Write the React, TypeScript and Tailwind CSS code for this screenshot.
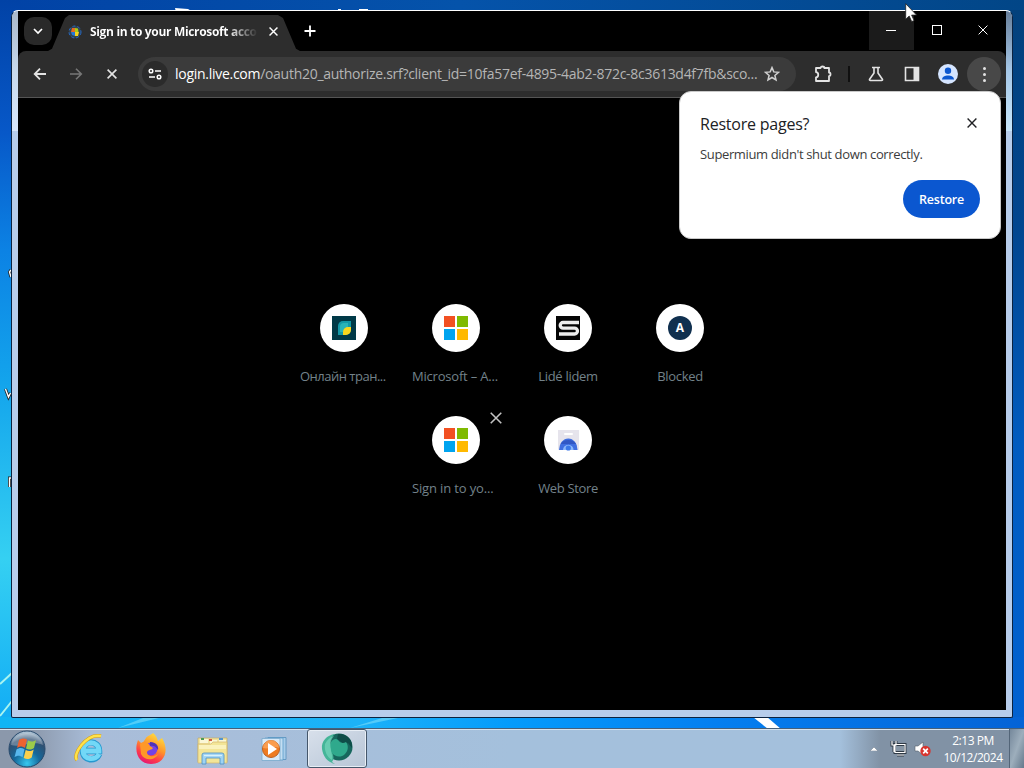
import type { ReactNode } from 'react'
import clsx from 'clsx'

interface Shortcut {
  id: string
  label: string
  icon: ReactNode
  truncated?: boolean
  removable?: boolean
  labelClass: string
}

function MicrosoftLogo() {
  return (
    <svg width="24" height="24" viewBox="0 0 24 24">
      <path fill="#f25022" d="M0 0h11v11H0z" />
      <path fill="#7fba00" d="M13 0h11v11H13z" />
      <path fill="#00a4ef" d="M0 13h11v11H0z" />
      <path fill="#ffb900" d="M13 13h11v11H13z" />
    </svg>
  )
}

function LeafLogo() {
  return (
    <svg width="24" height="24" viewBox="0 0 24 24">
      <path fill="#003947" d="M0 0h24v24H0z" />
      <path fill="#1399a8" d="M6 19V10a5 5 0 0 1 5-5h8v8a6 6 0 0 1-6 6z" />
      <path fill="#29b4b8" d="M8 16v-5a4 4 0 0 1 4-4h4v9z" />
      <path fill="#f7d61e" d="M11 19v-3a5 5 0 0 1 5-5h3v3a5 5 0 0 1-5 5z" />
    </svg>
  )
}

function SLogo() {
  return (
    <svg width="24" height="24" viewBox="0 0 24 24" fill="none">
      <path fill="#050505" d="M0 0h24v24H0z" />
      <path stroke="#eeeeee" strokeWidth="3.300" d="M23 6.500H7a2.700 2.700 0 0 0 0 5.600h11.500a2.900 2.900 0 0 1 0 5.900H3" />
    </svg>
  )
}

function WebStoreLogo() {
  return (
    <svg width="24" height="24" viewBox="0 0 24 24">
      <path fill="#e6e4ec" d="M2 2h21v19a1 1 0 0 1-1 1H3a1 1 0 0 1-1-1z" />
      <rect x="8" y="5" width="9" height="2" rx="1" fill="#fff" />
      <path fill="#3f6ee0" d="M3 22a9.300 11.500 0 0 1 18.600 0z" />
      <path fill="#3157c4" d="M4.500 16a8.800 7.500 0 0 1 15.600 0z" />
      <path fill="#8cb8fb" d="M7 22a5.300 5.300 0 0 1 10.600 0z" />
      <circle cx="12.300" cy="20" r="2.600" fill="#3a77e8" />
    </svg>
  )
}

const ROWS: Shortcut[][] = [
  [
    { id: 'translate', label: 'Онлайн тран...', icon: <LeafLogo />, truncated: true, labelClass: 'tracking-[-0.5px]' },
    { id: 'ms', label: 'Microsoft – A...', icon: <MicrosoftLogo />, truncated: true, labelClass: 'tracking-[-0.2px]' },
    { id: 'lide', label: 'Lidé lidem', icon: <SLogo />, labelClass: 'tracking-[-0.3px]' },
    {
      id: 'blocked',
      label: 'Blocked',
      icon: <span className="flex size-6 items-center justify-center rounded-full bg-[#10304f] text-[12px] font-bold text-white">A</span>,
      labelClass: 'tracking-[-0.3px]',
    },
  ],
  [
    { id: 'signin', label: 'Sign in to yo...', icon: <MicrosoftLogo />, truncated: true, removable: true, labelClass: 'tracking-[-0.15px]' },
    { id: 'store', label: 'Web Store', icon: <WebStoreLogo />, labelClass: 'tracking-[-0.35px]' },
  ],
]

function Cross({ size, width = 1.6, className }: { size: number; width?: number; className?: string }) {
  return (
    <svg width={size} height={size} viewBox="0 0 10 10" fill="none" stroke="currentColor" strokeWidth={width} className={className}>
      <path d="M.6.6l8.800 8.800M9.400.6L.6 9.400" />
    </svg>
  )
}

function Wallpaper() {
  return (
    <svg width="1024" height="768" className="absolute inset-0">
      <defs>
        <linearGradient id="wallTop">
          <stop offset="0" stopColor="#0142a6" />
          <stop offset=".45" stopColor="#0553aa" />
          <stop offset="1" stopColor="#024687" />
        </linearGradient>
        <linearGradient id="wallLeft" x2="0" y2="1">
          <stop offset="0" stopColor="#0142a6" />
          <stop offset=".18" stopColor="#0758c8" />
          <stop offset=".34" stopColor="#0c82e4" />
          <stop offset=".52" stopColor="#13a4ec" />
          <stop offset=".76" stopColor="#35d0f2" />
          <stop offset="1" stopColor="#0fa9f5" />
        </linearGradient>
        <linearGradient id="wallRight" x2="0" y2="1">
          <stop offset="0" stopColor="#03417c" />
          <stop offset=".3" stopColor="#02468f" />
          <stop offset=".6" stopColor="#025cc0" />
          <stop offset="1" stopColor="#0262d2" />
        </linearGradient>
        <linearGradient id="wallBottom">
          <stop offset="0" stopColor="#10b5f5" />
          <stop offset=".35" stopColor="#1cb2f8" />
          <stop offset=".5" stopColor="#049bfb" />
          <stop offset=".7" stopColor="#047ff0" />
          <stop offset="1" stopColor="#0463d6" />
        </linearGradient>
      </defs>
      <path fill="url(#wallTop)" d="M0 0h1024v20H0z" />
      <path fill="url(#wallLeft)" d="M0 0h20v735H0z" />
      <path fill="url(#wallRight)" d="M1000 10h24v725h-24z" />
      <path fill="url(#wallBottom)" d="M0 717h1024v12H0z" />
      <path fill="#fff" d="M175 8l13 1 5 3h-17zM338 10h3v-1h-3zM359 9h9v1h-9z" />
      <path fill="#fff" d="M753 717h14l14 12h-13z" />
      <path stroke="#a9f4f0" strokeWidth="2" d="M0 684l12-11M0 716l12-15" />
      <path fill="#8ee6fa" opacity=".5" d="M118 728l25-10h16zM350 728l32-10h16z" />
      {/* desktop labels peeking out from behind the window */}
      <path stroke="#222" strokeWidth="3" fill="none" d="M11 270l-1.500 2 1.500 5M5.500 389l3 8 2-4M9.500 487v-9h2" />
      <path stroke="#fff" strokeWidth="1.400" fill="none" d="M11 270l-1.500 2 1.500 5M5.500 389l3 8 2-4M9.500 487v-9h2" />
    </svg>
  )
}

function TabStrip() {
  return (
    <div className="flex h-10 shrink-0 bg-black">
      <button className="mt-[6px] ml-[6px] flex size-7 items-center justify-center rounded-[10px] bg-[#292929] text-white">
        <svg width="10" height="7" viewBox="0 0 10 7" fill="none" stroke="currentColor" strokeWidth="1.700">
          <path d="M1 1l4 4 4-4" />
        </svg>
      </button>
      <div className="mt-1 -ml-1 flex h-9 w-[252px] items-center bg-[#2d2d2d] pb-[3px] pl-5 [clip-path:polygon(0_100%,4px_94%,17px_8%,21px_0,230px_0,235px_8%,248px_94%,252px_100%)]">
        <svg width="14" height="14" viewBox="0 0 14 14" className="shrink-0">
          <circle cx="7" cy="7" r="6" fill="#33434f" stroke="#2469c7" strokeDasharray="3 2" />
          <path fill="#e66b20" d="M4 3h3v4H3z" />
          <path fill="#a7ce16" d="M7 3l3 .5.500 3.500H7z" />
          <path fill="#2478d6" d="M3 7h4v4l-3-1z" />
          <path fill="#f4d31d" d="M7 7h4l-1 4H7z" />
        </svg>
        <span className="mt-px ml-2 w-[168px] shrink-0 bg-linear-to-r from-white from-82% to-transparent bg-clip-text text-[12px] font-bold tracking-[-0.33px] whitespace-nowrap text-transparent">
          Sign in to your Microsoft acco
        </span>
        <Cross size={9} className="ml-[11px] shrink-0 text-white" />
      </div>
      <button className="mt-[14px] ml-1 h-3 text-white">
        <svg width="12" height="12" viewBox="0 0 12 12" stroke="currentColor" strokeWidth="1.800">
          <path d="M6 .5v11M.5 6h11" />
        </svg>
      </button>
      <div className="ml-auto flex text-white">
        <button className="flex h-[39px] w-[45px] items-center justify-center bg-[#1b1b1b] pr-[2px]">
          <span className="h-px w-[10px] bg-white" />
        </button>
        <button className="flex h-[38px] w-[46px] items-center justify-center">
          <span className="size-[10px] border border-white" />
        </button>
        <button className="flex h-[38px] w-[46px] items-center justify-center pr-px">
          <Cross size={10} width={1} />
        </button>
      </div>
    </div>
  )
}

function Toolbar() {
  return (
    <div className="h-[47px] shrink-0 bg-black">
      <div className="flex h-full items-center rounded-t-[8px] border-b border-[#555] bg-[#2d2d2d] text-[#e3e3e3]">
        <svg width="14" height="12" viewBox="0 0 14 12" fill="none" stroke="currentColor" strokeWidth="1.800" className="ml-[15px]">
          <path d="M13 6H1.500M7 .7L1.700 6 7 11.300" />
        </svg>
        <svg width="14" height="12" viewBox="0 0 14 12" fill="none" stroke="#777" strokeWidth="1.600" className="ml-[22px]">
          <path d="M1 6h11.500M7 .7L12.300 6 7 11.300" />
        </svg>
        <Cross size={10} className="ml-6" />
        <div className="ml-[21px] flex h-[34px] w-[658px] items-center rounded-full bg-[#3b3b3b]">
          <span className="ml-[4px] flex size-[26px] items-center justify-center rounded-full bg-[#2b2b2b]">
            <svg width="14" height="12" viewBox="0 0 14 12" fill="none" stroke="#fff" strokeWidth="1.500">
              <circle cx="3" cy="3" r="1.800" />
              <path d="M7 3h6M1 9h6" />
              <circle cx="11" cy="9" r="1.800" />
            </svg>
          </span>
          <span className="-mt-px ml-[7px] w-[584px] text-[14px] tracking-[-0.28px] whitespace-nowrap text-[#b5b5b5]">
            <span className="text-white">login.live.com</span>/oauth20_authorize.srf?client_id=10fa57ef-4895-4ab2-872c-8c3613d4f7fb&amp;sco...
          </span>
          <svg width="16" height="16" viewBox="0 0 16 16" fill="none" stroke="#d0d0d0" strokeWidth="1.500" className="ml-[5px]">
            <path d="M8 1.600l1.800 4.300 4.700.4-3.600 3.100 1.100 4.600L8 11.500 4 14l1.100-4.600-3.600-3.100 4.700-.4z" />
          </svg>
        </div>
        <svg width="18" height="18" viewBox="0 0 18 18" fill="none" stroke="currentColor" strokeWidth="1.800" strokeLinejoin="round" className="ml-[18px]">
          <path d="M2 3h4.500c0-2 3.800-2 3.800 0H15v4.500c2 0 2 3.600 0 3.600V16H2v-3.700c3-.3 3-4.900 0-5.200z" />
        </svg>
        <span className="ml-[16px] h-4 w-[2px] bg-[#101010]" />
        <svg width="16" height="16" viewBox="0 0 16 16" fill="none" stroke="currentColor" strokeWidth="1.600" strokeLinejoin="round" className="ml-[18px]">
          <path d="M4 1.500h8M6 2v5l-4.400 6.200c-.4.700 0 1.300.8 1.300h11.200c.8 0 1.200-.6.8-1.300L10 7V2" />
        </svg>
        <svg width="16" height="16" viewBox="0 0 16 16" className="ml-[20px]">
          <path fill="none" stroke="currentColor" strokeWidth="1.600" d="M1.500 1.500h13v13h-13z" />
          <path fill="currentColor" d="M9.500 1.500H15v13H9.500z" />
        </svg>
        <svg width="20" height="20" viewBox="0 0 20 20" className="ml-[18px]">
          <circle cx="10" cy="10" r="10" fill="#d5e5ff" />
          <circle cx="10" cy="6.800" r="3.200" fill="#0b57d0" />
          <path fill="#0b57d0" d="M4 15.500c0-5.500 12-5.500 12 0z" />
        </svg>
        <span className="ml-[9px] flex size-[34px] flex-col items-center justify-center gap-[3px] rounded-full bg-[#484848]">
          <i className="size-[3px] rounded-full bg-[#e3e3e3]" />
          <i className="size-[3px] rounded-full bg-[#e3e3e3]" />
          <i className="size-[3px] rounded-full bg-[#e3e3e3]" />
        </span>
      </div>
    </div>
  )
}

function ShortcutTile({ item }: { item: Shortcut }) {
  return (
    <div className="relative flex h-28 w-28 flex-col items-center">
      <div className="flex size-12 items-center justify-center rounded-full bg-white">{item.icon}</div>
      <div
        className={clsx(
          'mt-[14px] w-[88px] text-[13px] leading-5 whitespace-nowrap text-[#73828a]',
          item.truncated ? 'text-left' : 'text-center',
          item.labelClass,
        )}
      >
        {item.label}
      </div>
      {item.removable && <Cross size={12} width={1.3} className="absolute top-[-4px] right-[10px] text-[#c3c3c3]" />}
    </div>
  )
}

function RestoreBubble() {
  return (
    <div className="absolute top-[80px] left-[667px] flex h-[148px] w-[322px] flex-col rounded-[12px] border border-[#c9c9c9] bg-white px-5">
      <div className="mt-[20px] flex h-6 items-center justify-between text-[#202124]">
        <h2 className="text-[16px] tracking-[-0.22px]">Restore pages?</h2>
        <Cross size={10} width={1.4} className="mt-[-2px] mr-[3px]" />
      </div>
      <p className="mt-[8px] text-[13px] leading-5 tracking-[-0.36px] whitespace-nowrap text-[#3c3c3c]">Supermium didn't shut down correctly.</p>
      <button className="mt-[16px] ml-auto h-[38px] w-[77px] rounded-full bg-[#0b57d0] pt-[2px] text-[12.5px] font-semibold tracking-[-0.2px] text-white">
        Restore
      </button>
    </div>
  )
}

function BrowserWindow() {
  return (
    <div className="absolute top-[10px] left-[11px] h-[708px] w-[1002px] rounded-t-[7px] rounded-b-[2px] border border-[#0c2340] border-t-white bg-[#b7cdeb] px-[6px] pb-[7px]">
      <span className="absolute top-0 left-0 h-[120px] w-[6px] rounded-tl-[6px] bg-linear-to-b from-[#a9b8c9] via-[#c7d9ec] to-[#d8e7fb]" />
      <span className="absolute top-0 right-0 h-[120px] w-[6px] rounded-tr-[6px] bg-linear-to-b from-[#687f9a] via-[#a6c8e8] to-[#c8e7fb]" />
      <div className="flex h-full flex-col bg-black">
        <TabStrip />
        <Toolbar />
        <div className="flex flex-1 flex-col items-center pt-[206px]">
          {ROWS.map((row, i) => (
            <div key={i} className="flex">
              {row.map(item => (
                <ShortcutTile key={item.id} item={item} />
              ))}
            </div>
          ))}
        </div>
      </div>
      <RestoreBubble />
    </div>
  )
}

function StartOrb() {
  return (
    <svg width="38" height="38" viewBox="0 0 38 38">
      <defs>
        <radialGradient id="orb" cy=".9" r=".9">
          <stop offset="0" stopColor="#38c8ef" />
          <stop offset=".4" stopColor="#14689b" />
          <stop offset=".75" stopColor="#304f70" />
          <stop offset="1" stopColor="#c5d9e8" />
        </radialGradient>
      </defs>
      <circle cx="19" cy="19" r="18" fill="url(#orb)" stroke="#27496c" />
      <path fill="#ffffff" opacity=".28" d="M3 15C6-1 32-1 35 15c-10-5-22 3-32 0z" />
      <path fill="#ed6231" d="M11 10c3-2 5-2 8-.5L17 18c-3-2-5-2-8 0z" />
      <path fill="#9bcb4a" d="M20 10.500c3 1.500 5 1.500 8-.5l-2 8c-3 2-5 2-8 .5z" />
      <path fill="#58b7ed" d="M8.500 19.500c3-2 5-2 8-.2l-2 8c-3-2-5-2-8 0z" />
      <path fill="#fbd04c" d="M17.700 20c3 1.500 5 1.500 8-.5l-2 8c-3 2-5 2-8 .5z" />
    </svg>
  )
}

function ExplorerE() {
  return (
    <svg width="34" height="34" viewBox="0 0 34 34" fill="none">
      <path stroke="#2698cf" strokeWidth="6.500" d="M27 22c-3 8-16 7-16-3 0-12 16-11 16 0H12" />
      <path stroke="#72d8f7" strokeWidth="4.800" d="M27 22c-3 7-16 6-16-3 0-11 16-11 16 0H12" />
      <path stroke="#d69d16" strokeWidth="3.500" d="M5 28C0 23 14 1 29 4" />
      <path stroke="#ffe24a" strokeWidth="2.400" d="M5 28C0 23 14 1 29 4" />
    </svg>
  )
}

function FirefoxLogo() {
  return (
    <svg width="32" height="34" viewBox="0 0 32 34">
      <defs>
        <linearGradient id="fox" x1=".8" y1="0" x2=".3" y2="1">
          <stop offset="0" stopColor="#ffe744" />
          <stop offset=".45" stopColor="#ff9629" />
          <stop offset=".75" stopColor="#ff3b48" />
          <stop offset="1" stopColor="#e31675" />
        </linearGradient>
      </defs>
      <path fill="url(#fox)" d="M18 1c3 2 4 5 5 8l4-3c8 13 2 26-11 26C5 32-2 21 3 8l4 4 4-6c1-2 5-3 7-5z" />
      <circle cx="16" cy="17" r="6.500" fill="#7542e5" />
      <path fill="#ff9828" d="M5 12c4-4 8-2 10 2l3 2c-2 3-6 1-6 5 1 4 7 4 11 1-2 6-13 8-17 0z" />
      <path fill="#4f33b6" d="M15 10c6 0 9 4 8 8-2-4-5-5-8-4z" />
    </svg>
  )
}

function FolderIcon() {
  return (
    <svg width="34" height="32" viewBox="0 0 34 32">
      <path fill="#f1e4a0" stroke="#c2ac68" strokeWidth=".7" d="M2 3h29v24H2z" />
      <path fill="#fbf7d6" d="M4 4h8v4H4zM14 5h7v4h-7zM23 5h7v4h-7z" />
      <path fill="#4d9b55" d="M5 3h3v2H5z" />
      <path fill="#d25a43" d="M13 4h3v2h-3z" />
      <path fill="#5494cf" d="M23 3h4v2h-4z" />
      <path fill="#f3e597" stroke="#d2b66e" strokeWidth=".7" d="M2 9h13l2-2h14v21H2z" />
      <path fill="#faf2bd" d="M3 10h27v4H3z" />
      <path fill="#9fd3f2" stroke="#4b91c4" strokeWidth=".8" d="M6 29V20q0-2 2-2h18q2 0 2 2v9h-4v-6H10v6z" />
      <path stroke="#d8f1fc" strokeWidth="1.300" d="M8 20.500h18" />
    </svg>
  )
}

function MediaPlayerIcon() {
  return (
    <svg width="28" height="26" viewBox="0 0 28 26">
      <path fill="#a9cdea" stroke="#5591bd" strokeWidth=".8" d="M8 1.500h18v22H8z" />
      <path fill="#c3def2" stroke="#5b9cc9" strokeWidth=".8" d="M5 2h18v22H5z" />
      <path fill="#d7e9f8" stroke="#7aa9cb" strokeWidth=".8" d="M2 2.500h18v22H2z" />
      <circle cx="11" cy="13" r="8.500" fill="#ee7b21" stroke="#bd6122" />
      <path fill="#ffad63" opacity=".7" d="M3 12a8 8 0 0 1 16 0c-5-3-10 2-16 0z" />
      <path fill="#fff" d="M8 7l9 6-9 6z" />
    </svg>
  )
}

function SupermiumIcon() {
  return (
    <svg width="34" height="32" viewBox="0 0 34 32">
      <circle cx="19" cy="14" r="13.500" fill="#17675d" />
      <path fill="#0f4d48" d="M18 1c9-1 15 6 14 14l-4-5-4 1-7-5z" />
      <path fill="#45b598" d="M2 16C1 8 7 2 15 1c-5 4-6 9-4 15s4 9 1 13l3 2C7 29 3 23 2 16z" />
      <path fill="#2fa98c" d="M11 9c2-3 5-4 7-2 2 3 5 4 8 2 3 4 2 9-1 12-4 4-10 3-13-1-2-3-3-8-1-11z" />
      <path fill="#7fdcc2" opacity=".6" d="M5 11c2-4 5-7 9-8-4 5-4 9-3 13 0 4 2 7 1 11-5-3-8-9-7-16z" />
    </svg>
  )
}

function Tray() {
  return (
    <div className="ml-auto flex h-full items-center text-white">
      <svg width="8" height="5" viewBox="0 0 8 5" className="mb-px">
        <path fill="#fff" stroke="#6b7785" strokeWidth=".5" d="M0 5l4-4 4 4z" />
      </svg>
      <svg width="17" height="17" viewBox="0 0 17 17" fill="none" className="ml-[12px]">
        <path stroke="#303b46" strokeWidth="3" d="M5 4.500h10v8H5zM7 15h7M2 1v4h4V1M4 5v7" />
        <path stroke="#fff" strokeWidth="1.200" d="M5 4.500h10v8H5zM7 15h7M2 1v4h4V1M4 5v7" />
        <path fill="#8796a5" d="M6 6h8v5H6z" />
      </svg>
      <svg width="17" height="16" viewBox="0 0 17 16" className="ml-[7px]">
        <path fill="#fff" stroke="#555f69" strokeWidth=".6" d="M1 5h3l5-4v13l-5-4H1z" />
        <circle cx="11.500" cy="10" r="5.200" fill="#d7352f" />
        <path stroke="#fff" strokeWidth="1.700" d="M9.200 7.700l4.600 4.600M13.800 7.700l-4.600 4.600" />
      </svg>
      <div className="ml-[12px] w-[60px] text-center text-[12px] leading-[17px] tracking-[-0.45px] whitespace-nowrap">
        <div>2:13 PM</div>
        <div>10/12/2024</div>
      </div>
      <span className="ml-[6px] h-full w-[15px] border-l border-[#536578] bg-linear-to-br from-[#75889b] via-[#9daebc] to-[#66798c]" />
    </div>
  )
}

function Taskbar() {
  return (
    <div className="absolute top-[728px] left-0 flex h-10 w-full items-center border-t border-[#46607a] bg-[#a4c0dc]">
      <span className="absolute inset-0 bg-linear-to-r from-[#8b98ab] from-3% via-[#a9bdd9] via-9% to-[#a4c0dc] to-50%" />
      <span className="absolute top-0 right-0 bottom-0 w-[184px] bg-linear-to-r from-[#a4c0dc] to-[#8192a5] to-22%" />
      <span className="absolute top-0 h-px w-full bg-[#d6e3ef]" />
      <div className="relative flex h-full w-full items-center">
        <div className="ml-2"><StartOrb /></div>
        <div className="ml-[26px]"><ExplorerE /></div>
        <div className="ml-[29px]"><FirefoxLogo /></div>
        <div className="ml-[29px] pt-1"><FolderIcon /></div>
        <div className="ml-[30px]"><MediaPlayerIcon /></div>
        <div className="ml-[19px] flex h-[39px] w-[60px] items-center justify-center rounded-[3px] border border-[#45576b] bg-linear-to-br from-[#d8e0eb] to-[#b7c5d6] shadow-[inset_0_0_0_1px_#e8eef5]">
          <SupermiumIcon />
        </div>
        <Tray />
      </div>
    </div>
  )
}

export default function App() {
  return (
    <div className="relative h-[768px] w-[1024px] overflow-hidden bg-[#0463c8] font-['Open_Sans','Noto_Sans',sans-serif]">
      <Wallpaper />
      <BrowserWindow />
      <Taskbar />
      {/* mouse pointer */}
      <svg width="13" height="20" viewBox="0 0 13 20" className="absolute top-[3px] left-[905px]">
        <path fill="#fff" stroke="#222" strokeWidth=".8" d="M.7.7v15.600l3.500-3.300 2.500 5.600 2.400-1-2.500-5.500h5z" />
      </svg>
    </div>
  )
}
